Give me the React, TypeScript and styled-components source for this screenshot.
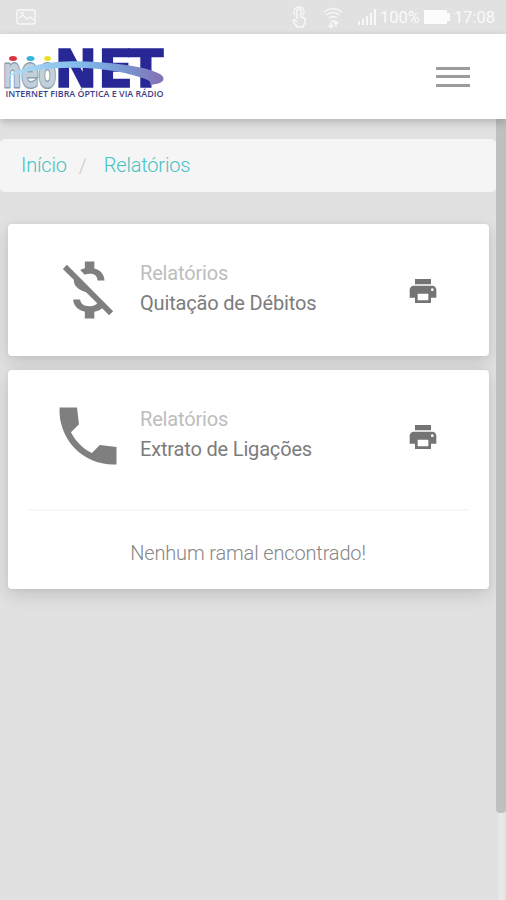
import React from "react";
import styled, { createGlobalStyle } from "styled-components";

const GlobalStyle = createGlobalStyle`
  *, *::before, *::after { box-sizing: border-box; }
  body {
    margin: 0;
    overflow: hidden;
    background: #e1e1e1;
    font-family: Roboto, "Open Sans", sans-serif;
  }
`;

const Screen = styled.div`
  display: flex;
  flex-direction: column;
  width: 506px;
  height: 900px;
  background: #e1e1e1;
`;

const StatusBar = styled.div`
  flex: none;
  display: flex;
  align-items: center;
  height: 34px;
  padding: 0 10px 0 16px;
  color: #fafafa;
  font-size: 16.5px;
`;

const StatusIcon = styled.svg<{ $gap?: number }>`
  flex: none;
  margin-right: ${(p) => p.$gap ?? 0}px;
  fill: none;
  stroke: #f8f8f8;
  stroke-width: 1.4;
`;

const Spacer = styled.div`
  flex: 1;
`;

const StatusText = styled.span<{ $width: number }>`
  width: ${(p) => p.$width}px;
  line-height: 34px;
  padding-top: 2px;
  white-space: nowrap;
`;

const Header = styled.header`
  flex: none;
  display: flex;
  align-items: center;
  justify-content: space-between;
  height: 85px;
  padding: 0 36px 0 0;
  background: #fff;
  z-index: 1;
  box-shadow: 0 3px 8px rgba(0, 0, 0, 0.2);
`;

const Logo = styled.svg`
  display: block;
`;

const MenuButton = styled.button`
  display: flex;
  flex-direction: column;
  justify-content: space-between;
  width: 34px;
  height: 20px;
  padding: 0;
  border: 0;
  background: none;
`;

const MenuBar = styled.span`
  height: 3px;
  background: #9c9c9c;
`;

const Body = styled.div`
  flex: 1;
  min-height: 0;
  display: flex;
`;

const Content = styled.main`
  flex: 1;
  min-width: 0;
  padding-top: 20px;
`;

const Breadcrumb = styled.nav`
  display: flex;
  align-items: center;
  height: 53px;
  padding: 0 21px;
  border-radius: 5px;
  background: #f5f5f5;
  font-size: 20px;
`;

const Crumb = styled.a`
  color: #45c2c3;
  font-weight: 350;
  letter-spacing: -0.18px;
  line-height: 50px;
  padding-bottom: 2px;
`;

const Separator = styled.span`
  width: 37px;
  padding-left: 12px;
  color: #c9c9c9;
  font-weight: 300;
`;

const Cards = styled.div`
  display: flex;
  flex-direction: column;
  gap: 14px;
  padding: 32px 7px 0 8px;
`;

const Card = styled.section`
  border-radius: 4px;
  background: #fff;
  box-shadow: 0 6px 18px rgba(0, 0, 0, 0.13), 0 1px 5px rgba(0, 0, 0, 0.05);
`;

const CardRow = styled.div`
  display: flex;
  align-items: center;
  height: 132px;
  padding: 0 50px 0 42px;
`;

const CardIcon = styled.svg`
  width: 76px;
  height: 76px;
  fill: #7f7f7f;
`;

const CardText = styled.div`
  flex: 1;
  padding-left: 14px;
  margin-top: -5px;
  font-size: 20px;
  letter-spacing: -0.17px;
  line-height: 30px;
`;

const Category = styled.div`
  color: #bdbdbd;
`;

const Title = styled.div`
  color: #7c7c7c;
`;

const PrintIcon = styled.svg`
  width: 32px;
  height: 32px;
  margin-top: 2px;
  fill: #747474;
`;

const CardFooter = styled.div`
  display: flex;
  align-items: center;
  justify-content: center;
  height: 80px;
  margin: 7px 20px 0;
  padding: 5px 1px 0 0;
  border-top: 2px solid #f7f7f7;
  color: #868686;
  font-size: 20px;
  font-weight: 300;
  letter-spacing: -0.15px;
`;

const ScrollTrack = styled.div`
  width: 10px;
  background: linear-gradient(90deg, #dedede, #ebebeb 50%, #e2e2e2);
`;

const ScrollThumb = styled.div`
  height: 694px;
  border-radius: 0 0 4px 4px;
  background: #bfbfbf;
`;

const MONEY_OFF =
  "M12.5 6.9c1.78 0 2.44.85 2.5 2.1h2.21c-.07-1.72-1.12-3.3-3.21-3.81V3h-3v2.16c-.53.12-1.03.3-1.48.54l1.47 1.47c.41-.17.91-.27 1.51-.27zM5.33 4.06L4.06 5.33 7.5 8.77c0 2.08 1.56 3.21 3.91 3.91l3.51 3.51c-.34.48-1.05.91-2.42.91-2.06 0-2.87-.92-2.98-2.1h-2.2c.12 2.19 1.76 3.42 3.68 3.83V21h3v-2.15c.96-.18 1.82-.55 2.45-1.12l2.22 2.22 1.27-1.27L5.33 4.06z";
const PHONE =
  "M21 15.46l-5.27-.61-2.52 2.52c-2.83-1.44-5.15-3.75-6.59-6.59l2.53-2.53L8.54 3H3.03C2.45 13.18 10.82 21.55 21 20.97v-5.51z";
const PRINT =
  "M19 8H5c-1.66 0-3 1.34-3 3v6h4v4h12v-4h4v-6c0-1.66-1.34-3-3-3zm-3 11H8v-5h8v5zm3-7c-.55 0-1-.45-1-1s.45-1 1-1 1 .45 1 1-.45 1-1 1zm-1-9H6v4h12V3z";

function Brand() {
  return (
    <Logo width="170" height="85" viewBox="0 34 170 85">
      <defs>
        <linearGradient id="swoosh" x1="0" x2="1">
          <stop offset="0" stopColor="#b4def3" />
          <stop offset="0.45" stopColor="#83bdec" />
          <stop offset="0.75" stopColor="#7896d2" />
          <stop offset="1" stopColor="#8570b5" />
        </linearGradient>
      </defs>
      <text
        x="54.500 98 128.500"
        y="86.500"
        fontFamily="DejaVu Sans"
        fontWeight="700"
        fontSize="51"
        fill="#272895"
        stroke="#272895"
        strokeWidth="1.6"
      >
        NET
      </text>
      <text
        x="3"
        y="86.500"
        textLength="53"
        lengthAdjust="spacingAndGlyphs"
        fontFamily="DejaVu Sans"
        fontWeight="700"
        fontSize="42"
        fill="#c3d0dc"
        stroke="#8b9fb2"
        strokeWidth="3"
        strokeLinejoin="round"
        paintOrder="stroke"
      >
        neo
      </text>
      <path
        d="M6 77C24 64 60 59 97 62C128 64 162 70 163.500 78C164 82 159 84 150 85C153 80 143 78 125 73C87 65 40 66 6 77Z"
        fill="url(#swoosh)"
      />
      <ellipse cx="13" cy="58.500" rx="4" ry="2.500" fill="#d8343f" />
      <ellipse cx="30.500" cy="58.500" rx="4" ry="2.500" fill="#35b5d9" />
      <ellipse cx="47.500" cy="58.500" rx="3.500" ry="2.500" fill="#e9e02d" />
      <text
        x="5.500"
        y="97"
        textLength="158"
        lengthAdjust="spacingAndGlyphs"
        fontFamily="Open Sans"
        fontWeight="600"
        fontSize="9"
        fill="#3f3f88"
      >
        INTERNET FIBRA ÓPTICA E VIA RÁDIO
      </text>
    </Logo>
  );
}

function ReportRow({ icon, title }: { icon: string; title: string }) {
  return (
    <CardRow>
      <CardIcon viewBox="0 0 24 24">
        <path d={icon} />
      </CardIcon>
      <CardText>
        <Category>Relatórios</Category>
        <Title>{title}</Title>
      </CardText>
      <PrintIcon viewBox="0 0 24 24">
        <path d={PRINT} />
      </PrintIcon>
    </CardRow>
  );
}

export default function App() {
  return (
    <>
      <GlobalStyle />
      <Screen>
        <StatusBar>
          <StatusIcon width="20" height="16" viewBox="0 0 20 16">
            <rect x="1" y="1" width="18" height="14" rx="2" />
            <path d="M3 9l4-3 4 4 3-2 4 3M4 4h4" />
          </StatusIcon>
          <Spacer />
          <StatusIcon $gap={16} width="16" height="24" viewBox="0 0 16 24">
            <path d="M4 10a5 5 0 1 1 8 0M6 14V6a2 2 0 0 1 4 0v6l3 1q2 1 1 4l-2 5H6l-4-6q0-2 2-1l2 2" />
          </StatusIcon>
          <StatusIcon $gap={14} width="20" height="24" viewBox="0 0 20 24">
            <path d="M1 7q9-7 18 0M3.500 10q6.500-5 13 0M6 13q4-3 8 0M8 16h4M8 17v5M5.500 20l2.500 2.500 2-2.500M13 22v-5M11 19l2-2.500 2.500 2.500" />
          </StatusIcon>
          <StatusIcon $gap={3} width="20" height="18" viewBox="0 0 20 18">
            <path d="M2 13v4M6 11v6M10 8v9M14 5v12M18 1v16" strokeWidth="2" />
          </StatusIcon>
          <StatusText $width={44}>100%</StatusText>
          <StatusIcon $gap={4} width="26" height="16" viewBox="0 0 26 16">
            <path d="M0 1h23v3h3v8h-3v3H0z" fill="#fcfcfc" stroke="none" />
          </StatusIcon>
          <StatusText $width={42}>17:08</StatusText>
        </StatusBar>
        <Header>
          <Brand />
          <MenuButton aria-label="Menu">
            <MenuBar />
            <MenuBar />
            <MenuBar />
          </MenuButton>
        </Header>
        <Body>
          <Content>
            <Breadcrumb>
              <Crumb>Início</Crumb>
              <Separator>/</Separator>
              <Crumb>Relatórios</Crumb>
            </Breadcrumb>
            <Cards>
              <Card>
                <ReportRow icon={MONEY_OFF} title="Quitação de Débitos" />
              </Card>
              <Card>
                <ReportRow icon={PHONE} title="Extrato de Ligações" />
                <CardFooter>Nenhum ramal encontrado!</CardFooter>
              </Card>
            </Cards>
          </Content>
          <ScrollTrack>
            <ScrollThumb />
          </ScrollTrack>
        </Body>
      </Screen>
    </>
  );
}
